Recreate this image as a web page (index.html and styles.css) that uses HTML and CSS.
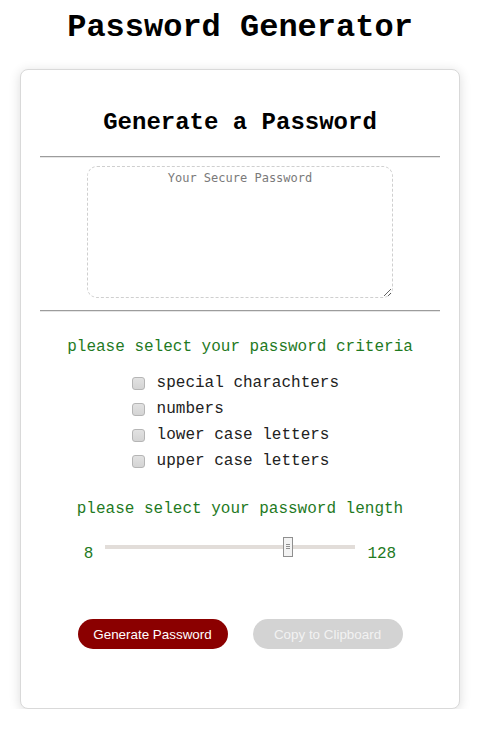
FILE: index.html
```html
<!DOCTYPE html>
<html lang="en">
<head>
<meta charset="utf-8">
<title>Password Generator</title>
<link rel="stylesheet" href="styles.css">
</head>
<body>
<div class="wrapper">
  <h1 class="title">Password Generator</h1>
  <div class="card">
    <h2 class="card-title">Generate a Password</h2>
    <hr class="rule">
    <textarea class="password" placeholder="Your Secure Password" aria-label="Generated Password"></textarea>
    <hr class="rule rule-bottom">
    <p class="prompt prompt-criteria">please select your password criteria</p>
    <div class="criteria">
      <label class="option"><input type="checkbox" class="check"> special charachters</label>
      <label class="option"><input type="checkbox" class="check"> numbers</label>
      <label class="option"><input type="checkbox" class="check"> lower case letters</label>
      <label class="option"><input type="checkbox" class="check"> upper case letters</label>
    </div>
    <p class="prompt prompt-length">please select your password length</p>
    <div class="length-row">
      <span class="bound">8</span>
      <input type="range" class="slider" min="8" max="128" value="97">
      <span class="bound">128</span>
    </div>
    <div class="actions">
      <button class="btn btn-generate">Generate Password</button>
      <button class="btn btn-copy">Copy to Clipboard</button>
    </div>
  </div>
</div>
</body>
</html>
```
FILE: styles.css
```css
html, body {
  margin: 0;
  padding: 0;
  background: #ffffff;
}

body {
  font-family: "Liberation Mono", "Courier New", monospace;
  color: #111;
}

.wrapper {
  padding: 0 22px 0 20px;
}

.title {
  margin: 10px 0 23px;
  font-size: 32px;
  line-height: 36px;
  font-weight: bold;
  text-align: center;
  color: #000;
}

.card {
  background: #fff;
  border: 1px solid #d9d9d9;
  border-radius: 8px;
  box-shadow: 0 2px 12px rgba(0, 0, 0, 0.14);
  padding: 39px 19px 59px;
}

.card-title {
  margin: 0 0 19px;
  font-size: 24px;
  line-height: 28px;
  font-weight: bold;
  text-align: center;
  color: #000;
}

.rule {
  height: 0;
  margin: 0 0 8px;
  border: none;
  border-top: 1px solid #9c9c9c;
  border-bottom: 1px solid #e6e6e6;
}

.rule-bottom {
  margin: 0;
}

.password {
  display: block;
  box-sizing: border-box;
  width: 306px;
  height: 132px;
  margin: 0 auto 12px;
  padding: 4px 6px;
  border: 1px dashed #cfcfcf;
  border-radius: 10px;
  font-family: "DejaVu Sans Mono", "Liberation Mono", monospace;
  font-size: 12px;
  line-height: 14px;
  text-align: center;
  color: #333;
  background: #fff;
}

.password::placeholder {
  color: #7a7a7a;
}

.prompt {
  margin: 0;
  font-size: 16px;
  line-height: 20px;
  text-align: center;
  color: #1f7a1f;
}

.prompt-criteria {
  margin-top: 25px;
}

.criteria {
  display: flex;
  flex-direction: column;
  margin-top: 13px;
  padding-left: 88px;
}

.option {
  display: flex;
  align-items: center;
  height: 26px;
  font-size: 16px;
  color: #222;
  white-space: pre;
}

.check {
  -webkit-appearance: none;
  appearance: none;
  box-sizing: border-box;
  width: 13px;
  height: 13px;
  margin: 0 2px 0 4px;
  border: 1px solid #b5b5b5;
  border-radius: 3px;
  background: linear-gradient(#e2e2e2, #d4d4d4);
}

.prompt-length {
  margin-top: 25px;
}

.length-row {
  display: flex;
  justify-content: center;
  align-items: flex-start;
  gap: 12px;
  margin-top: 18px;
  height: 20px;
}

.bound {
  font-size: 16px;
  line-height: 20px;
  padding-top: 7px;
  color: #1f7a1f;
}

.slider {
  -webkit-appearance: none;
  appearance: none;
  width: 250px;
  height: 20px;
  margin: 0;
  background: transparent;
}

.slider::-webkit-slider-runnable-track {
  height: 4px;
  background: #e2ddd9;
  border: none;
}

.slider::-webkit-slider-thumb {
  -webkit-appearance: none;
  appearance: none;
  box-sizing: border-box;
  width: 10px;
  height: 20px;
  margin-top: -8px;
  border: 1px solid #8f8f8f;
  background-color: #f3f3f3;
  background-image:
    linear-gradient(#8f8f8f, #8f8f8f),
    linear-gradient(#8f8f8f, #8f8f8f),
    linear-gradient(#8f8f8f, #8f8f8f);
  background-size: 4px 1px;
  background-repeat: no-repeat;
  background-position: 2px 6px, 2px 8px, 2px 10px;
}

.actions {
  display: flex;
  justify-content: center;
  gap: 25px;
  margin-top: 62px;
}

.btn {
  width: 150px;
  height: 30px;
  border: none;
  border-radius: 15px;
  font-family: "Liberation Sans", Arial, sans-serif;
  font-size: 13.4px;
  color: #fff;
  padding: 0;
}

.btn-generate {
  background: #8b0000;
}

.btn-copy {
  background: #d3d3d3;
  color: #f2f2f2;
}
```
